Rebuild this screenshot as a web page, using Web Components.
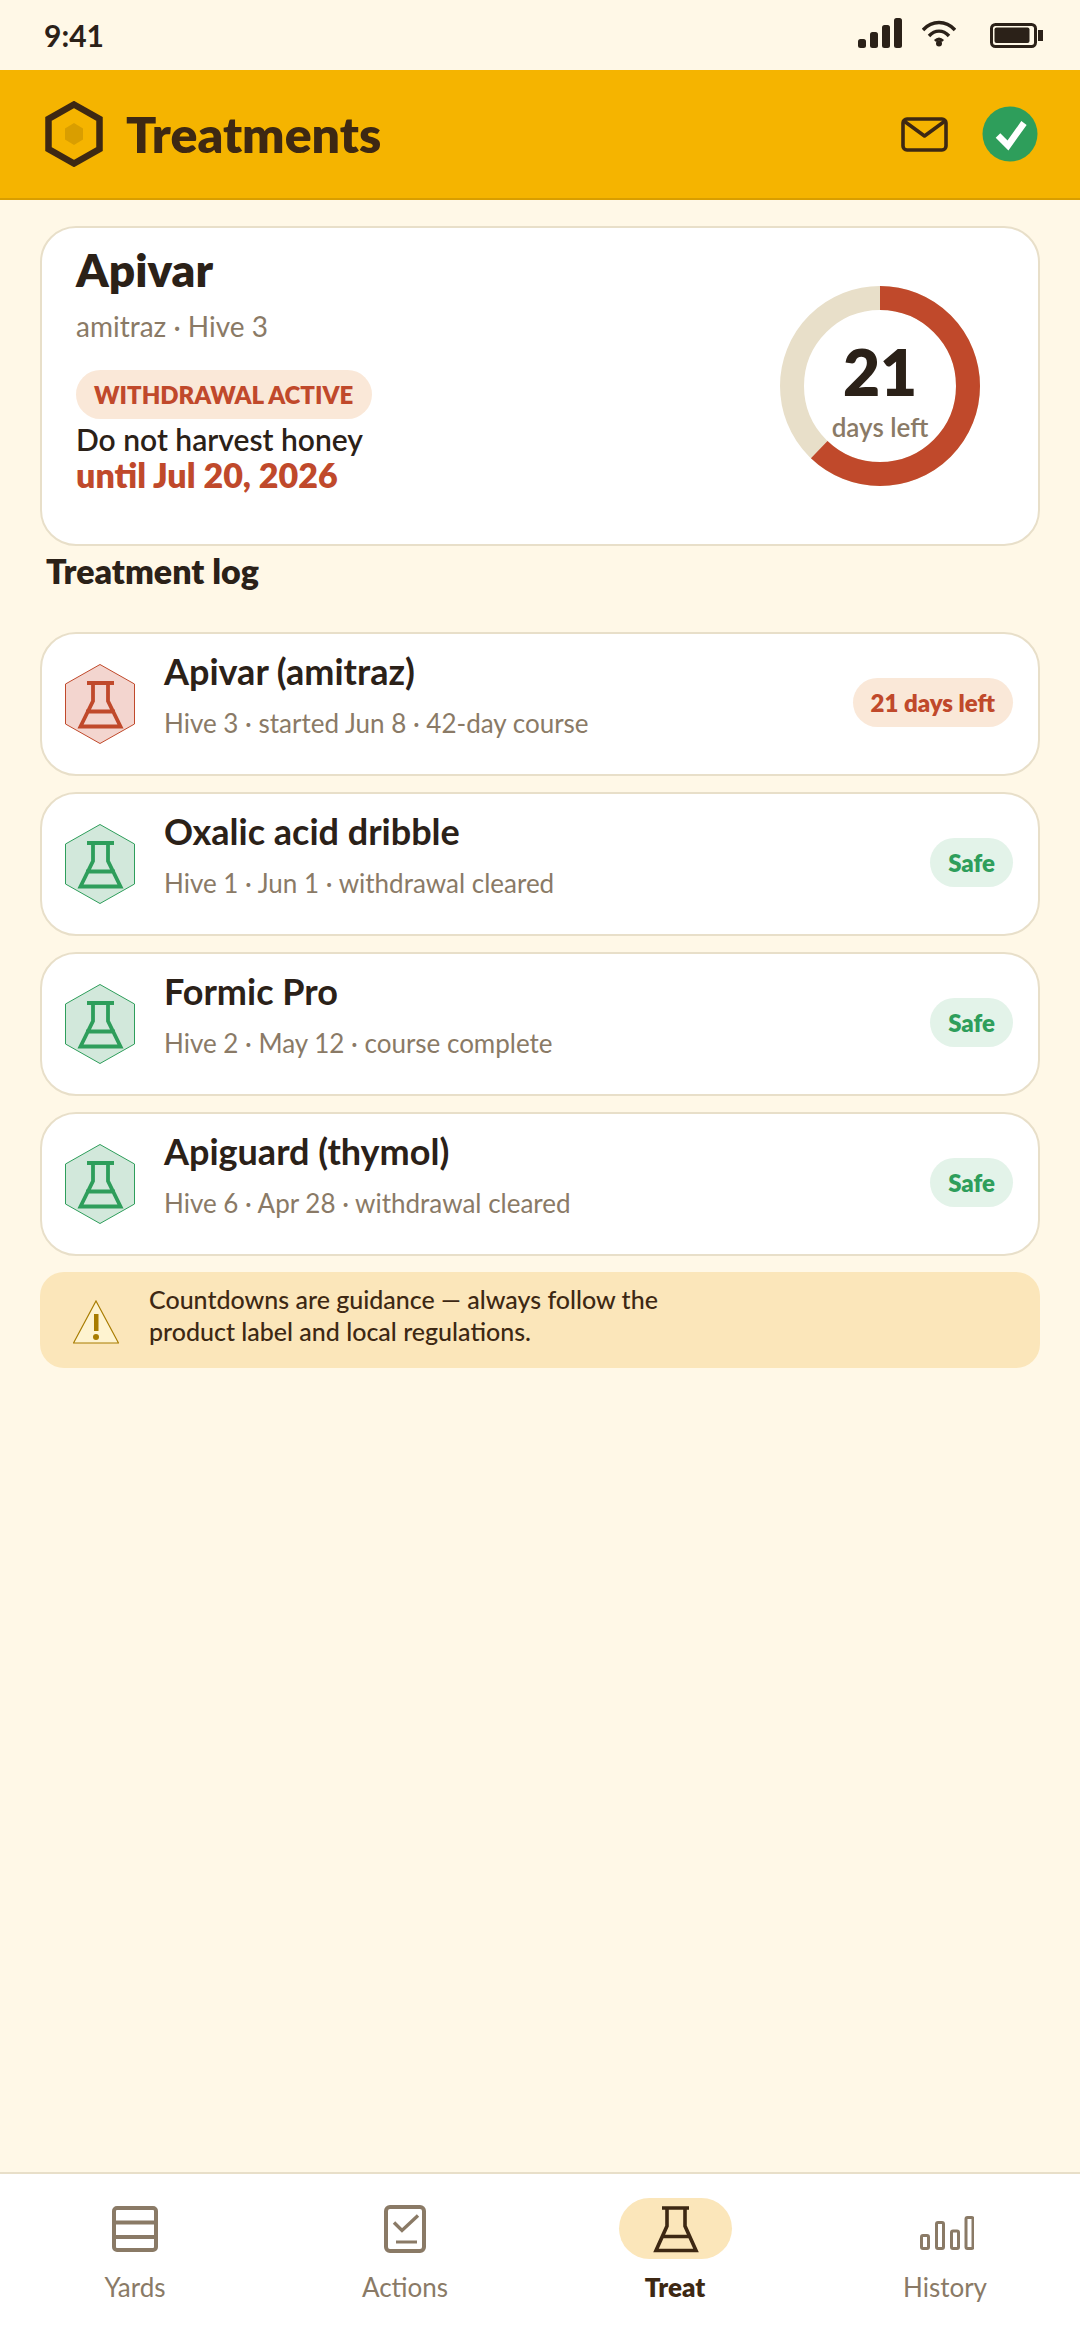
<!DOCTYPE html>
<html>
<head>
<meta charset="utf-8">
<style>
  html, body { margin: 0; background: #FFF8E7; }
  body { font-family: Lato, "Open Sans", sans-serif; color: #2B2118; }
</style>
</head>
<body>
<treat-app>
  <status-bar slot="status"></status-bar>
  <app-header slot="header" title="Treatments"></app-header>
  <withdrawal-card name="Apivar" meta="amitraz · Hive 3" tag="WITHDRAWAL ACTIVE" note="Do not harvest honey" until="until Jul 20, 2026" days="21"></withdrawal-card>
  <section-title>Treatment log</section-title>
  <log-list>
    <log-row tone="red" name="Apivar (amitraz)" meta="Hive 3 · started Jun 8 · 42-day course" chip="21 days left"></log-row>
    <log-row tone="green" name="Oxalic acid dribble" meta="Hive 1 · Jun 1 · withdrawal cleared" chip="Safe"></log-row>
    <log-row tone="green" name="Formic Pro" meta="Hive 2 · May 12 · course complete" chip="Safe"></log-row>
    <log-row tone="green" name="Apiguard (thymol)" meta="Hive 6 · Apr 28 · withdrawal cleared" chip="Safe"></log-row>
  </log-list>
  <notice-banner>Countdowns are guidance — always follow the<br>product label and local regulations.</notice-banner>
  <tab-bar slot="tabs">
    <tab-item label="Yards" icon="yards"></tab-item>
    <tab-item label="Actions" icon="actions"></tab-item>
    <tab-item label="Treat" icon="flask" active></tab-item>
    <tab-item label="History" icon="history"></tab-item>
  </tab-bar>
</treat-app>

<script>
const flaskPaths = `
  <path d="M22 19H49M28 19V37L15.5 62.5H55.5L43 37V19M21 47.5H50"/>`;

class TreatApp extends HTMLElement {
  constructor() {
    super();
    this.attachShadow({ mode: 'open' }).innerHTML = `
      <style>
        :host { display: flex; flex-direction: column; height: 2340px; background: #FFF8E7; }
        main { flex: 1; display: flex; flex-direction: column; padding: 26px 40px 0; }
      </style>
      <slot name="status"></slot>
      <slot name="header"></slot>
      <main><slot></slot></main>
      <slot name="tabs"></slot>`;
  }
}

class StatusBar extends HTMLElement {
  constructor() {
    super();
    this.attachShadow({ mode: 'open' }).innerHTML = `
      <style>
        :host { display: flex; height: 70px; align-items: center; justify-content: space-between; padding: 0 37px 0 44px; color: #2B2118; }
        .time { font-size: 30px; font-weight: 700; line-height: 70px; }
        .icons { display: flex; align-items: flex-start; height: 70px; }
        svg { display: block; margin-top: 18px; }
        .wifi { margin: 20px 34px 0 20px; }
        .bat { margin-top: 23px; }
      </style>
      <span class="time">9:41</span>
      <div class="icons">
        <svg width="44" height="30" viewBox="0 0 44 30" fill="currentColor">
          <rect x="0" y="21" width="8" height="9" rx="2.5"/><rect x="12" y="14" width="8" height="16" rx="2.5"/>
          <rect x="24" y="7" width="8" height="23" rx="2.5"/><rect x="36" y="0" width="8" height="30" rx="2.5"/>
        </svg>
        <svg class="wifi" width="34" height="27" viewBox="0 0 34 27" fill="none" stroke="currentColor" stroke-width="3.4">
          <path d="M1 10C10 0 24 0 33 10"/><path d="M7 16C13 9.5 21 9.5 27 16"/>
          <path d="M13 21C15.5 18.5 18.500 18.500 21 21" stroke-width="3"/><circle cx="17" cy="23.500" r="3" fill="currentColor" stroke="none"/>
        </svg>
        <svg class="bat" width="53" height="26" viewBox="0 0 53 26">
          <rect x="1.5" y="1.5" width="44" height="22" rx="4" fill="none" stroke="currentColor" stroke-width="3"/>
          <rect x="4.500" y="4.500" width="35" height="15.500" rx="2" fill="currentColor"/>
          <rect x="48" y="7" width="5" height="11" fill="currentColor"/>
        </svg>
      </div>`;
  }
}

class AppHeader extends HTMLElement {
  constructor() {
    super();
    this.attachShadow({ mode: 'open' }).innerHTML = `
      <style>
        :host { display: flex; align-items: center; box-sizing: border-box; height: 130px; background: #F5B400; border-bottom: 2px solid #D99E00; padding: 0 42px 0 45px; color: #3D2813; }
        h1 { margin: 0 0 0 23px; flex: 1; font-size: 50px; line-height: 60px; font-weight: 800; }
        svg { display: block; }
        .mail { margin-right: 34px; }
      </style>
      <svg width="58" height="66" viewBox="0 0 58 66">
        <path d="M29 3.5L54.5 18V48L29 62.5L3.5 48V18Z" fill="none" stroke="#3D2813" stroke-width="6.5"/>
        <path d="M29 22L38 27.5V38.5L29 44L20 38.5V27.5Z" fill="#D99E00"/>
      </svg>
      <h1>${this.getAttribute('title')}</h1>
      <svg class="mail" width="47" height="35" viewBox="0 0 47 35" fill="none" stroke="#3D2813" stroke-width="3.6" stroke-linejoin="round">
        <rect x="2" y="2" width="43" height="31" rx="4"/><path d="M3 4L23.5 19L44 4"/>
      </svg>
      <svg width="56" height="56" viewBox="0 0 56 56">
        <circle cx="28" cy="28" r="27.5" fill="#2E9E5B"/>
        <path d="M16 29.5L26 39.5L42 17" fill="none" stroke="#fff" stroke-width="6.5"/>
      </svg>`;
  }
}

class WithdrawalCard extends HTMLElement {
  constructor() {
    super();
    const a = n => this.getAttribute(n);
    this.attachShadow({ mode: 'open' }).innerHTML = `
      <style>
        :host { display: flex; align-items: center; justify-content: space-between; box-sizing: border-box; height: 320px; background: #fff; border: 2px solid #E8DFC9; border-radius: 36px; padding: 0 58px 0 34px; }
        .info { align-self: flex-start; margin-top: 14px; }
        h2 { margin: 0; font-size: 46px; line-height: 56px; font-weight: 800; color: #2B2118; }
        .meta { font-size: 28px; line-height: 36px; color: #8A7A66; margin-top: 10px; }
        .tag { display: block; width: fit-content; margin-top: 26px; background: #FAE8D8; color: #C0492B; font-size: 24px; line-height: 49px; font-weight: 800; padding: 0 19px 0 18px; border-radius: 25px; }
        .note { font-size: 30px; line-height: 34px; font-weight: 600; margin-top: 3px; }
        .until { font-size: 34px; line-height: 38px; font-weight: 800; color: #C0492B; }
        .ring { position: relative; width: 200px; height: 200px; flex: none; }
        .ring svg { display: block; }
        .center { position: absolute; inset: 0; padding-top: 10px; box-sizing: border-box; display: flex; flex-direction: column; align-items: center; justify-content: center; }
        .num { font-size: 64px; line-height: 66px; font-weight: 800; color: #2B2118; }
        .lbl { font-size: 26px; line-height: 32px; font-weight: 600; color: #8A7A66; margin-top: 6px; }
      </style>
      <div class="info">
        <h2>${a('name')}</h2>
        <div class="meta">${a('meta')}</div>
        <span class="tag">${a('tag')}</span>
        <div class="note">${a('note')}</div>
        <div class="until">${a('until')}</div>
      </div>
      <div class="ring">
        <svg width="200" height="200" viewBox="0 0 200 200" fill="none" stroke-width="24">
          <circle cx="100" cy="100" r="88" stroke="#E8DFC9"/>
          <circle cx="100" cy="100" r="88" stroke="#C0492B" stroke-dasharray="343 553" transform="rotate(-90 100 100)"/>
        </svg>
        <div class="center"><span class="num">${a('days')}</span><span class="lbl">days left</span></div>
      </div>`;
  }
}

class SectionTitle extends HTMLElement {
  constructor() {
    super();
    this.attachShadow({ mode: 'open' }).innerHTML = `
      <style>
        :host { display: block; font-size: 34px; line-height: 44px; font-weight: 800; color: #2B2118; margin: 3px 0 39px 6px; }
      </style>
      <slot></slot>`;
  }
}

class LogList extends HTMLElement {
  constructor() {
    super();
    this.attachShadow({ mode: 'open' }).innerHTML = `
      <style>:host { display: flex; flex-direction: column; gap: 16px; }</style>
      <slot></slot>`;
  }
}

class LogRow extends HTMLElement {
  constructor() {
    super();
    const a = n => this.getAttribute(n);
    const c = a('tone') === 'red'
      ? { fg: '#C0492B', hex: '#F3D5CF', chip: '#FAE8D8' }
      : { fg: '#2E9E5B', hex: '#D2E8DB', chip: '#E3F3E9' };
    this.attachShadow({ mode: 'open' }).innerHTML = `
      <style>
        :host { display: flex; align-items: center; box-sizing: border-box; height: 144px; background: #fff; border: 2px solid #E8DFC9; border-radius: 36px; padding: 0 25px 0 23px; }
        svg { display: block; flex: none; overflow: visible; }
        .txt { flex: 1; margin-left: 29px; align-self: flex-start; margin-top: 14px; }
        .name { font-size: 36px; line-height: 46px; font-weight: 700; color: #2B2118; }
        .meta { font-size: 26px; line-height: 34px; color: #8A7A66; margin-top: 12px; }
        .chip { background: ${c.chip}; color: ${c.fg}; font-size: 24px; line-height: 49px; font-weight: 800; padding: 0 18px; border-radius: 25px; margin-bottom: 3px; }
      </style>
      <svg width="70" height="80" viewBox="0 0 70 80" fill="none">
        <path d="M35 .5L69.5 20V60L35 79.5L.5 60V20Z" fill="${c.hex}" stroke="${c.fg}" stroke-width="1"/>
        <g stroke="${c.fg}" stroke-width="3.800">${flaskPaths}</g>
      </svg>
      <div class="txt">
        <div class="name">${a('name')}</div>
        <div class="meta">${a('meta')}</div>
      </div>
      <span class="chip">${a('chip')}</span>`;
  }
}

class NoticeBanner extends HTMLElement {
  constructor() {
    super();
    this.attachShadow({ mode: 'open' }).innerHTML = `
      <style>
        :host { display: flex; align-items: center; box-sizing: border-box; height: 96px; margin-top: 16px; background: #FBE6BA; border-radius: 24px; padding: 0 33px; color: #3D2813; font-size: 25px; line-height: 32px; font-weight: 500; }
        svg { display: block; flex: none; margin-top: 3px; }
        .t { margin: 0 0 11px 30px; }
      </style>
      <svg width="46" height="44" viewBox="0 0 46 44">
        <path d="M23 1L45.5 43H.5Z" fill="#FEF3D0" stroke="#A87C00" stroke-width="1.2"/>
        <rect x="21" y="14" width="4.5" height="17" fill="#A87C00"/><circle cx="23" cy="37" r="3" fill="#A87C00"/>
      </svg>
      <div class="t"><slot></slot></div>`;
  }
}

class TabBar extends HTMLElement {
  constructor() {
    super();
    this.attachShadow({ mode: 'open' }).innerHTML = `
      <style>
        :host { display: grid; grid-template-columns: repeat(4, 1fr); box-sizing: border-box; height: 168px; background: #fff; border-top: 2px solid #E8DFC9; padding-top: 24px; }
      </style>
      <slot></slot>`;
  }
}

const tabIcons = {
  yards: `<svg width="46" height="46" viewBox="0 0 46 46" fill="none" stroke="currentColor" stroke-width="4"><rect x="2" y="2" width="42" height="42" rx="3"/><path d="M2 16.500H44M2 31H44"/></svg>`,
  actions: `<svg width="42" height="48" viewBox="0 0 42 48" fill="none" stroke="currentColor" stroke-width="4"><rect x="2" y="2" width="38" height="44" rx="4"/><path d="M10 17.500L18 25.500L34 10.500" stroke-width="3.400"/><path d="M12 37H33" stroke-width="3"/></svg>`,
  flask: `<svg width="48" height="48" viewBox="0 0 48 48" fill="none" stroke="currentColor" stroke-width="3.600"><path d="M11 3H38M16 3V21L5 45.500H45L34 21V3M10 31.500H40"/></svg>`,
  history: `<svg width="54" height="34" viewBox="0 0 54 34" fill="none" stroke="currentColor" stroke-width="3"><rect x="1.500" y="19.500" width="7" height="13" rx="1.500"/><rect x="16.500" y="6.500" width="7" height="26" rx="1.500"/><rect x="31.500" y="15" width="7" height="17.500" rx="1.500"/><rect x="46" y="1.500" width="7" height="31" rx="1.500"/></svg>`
};

class TabItem extends HTMLElement {
  constructor() {
    super();
    const active = this.hasAttribute('active');
    this.attachShadow({ mode: 'open' }).innerHTML = `
      <style>
        :host { display: flex; flex-direction: column; align-items: center; color: ${active ? '#3D2813' : '#8A7A66'}; }
        .icon { display: flex; align-items: center; justify-content: center; width: 113px; height: 61px; border-radius: 31px; background: ${active ? '#FBE6BA' : 'transparent'}; }
        .icon.history { align-items: flex-end; padding: 0 0 9px 4px; box-sizing: border-box; }
        svg { display: block; }
        .lbl { font-size: 26px; line-height: 34px; margin-top: 11px; font-weight: ${active ? 800 : 400}; }
      </style>
      <div class="icon ${this.getAttribute('icon')}">${tabIcons[this.getAttribute('icon')]}</div>
      <div class="lbl">${this.getAttribute('label')}</div>`;
  }
}

customElements.define('treat-app', TreatApp);
customElements.define('status-bar', StatusBar);
customElements.define('app-header', AppHeader);
customElements.define('withdrawal-card', WithdrawalCard);
customElements.define('section-title', SectionTitle);
customElements.define('log-list', LogList);
customElements.define('log-row', LogRow);
customElements.define('notice-banner', NoticeBanner);
customElements.define('tab-bar', TabBar);
customElements.define('tab-item', TabItem);
</script>
</body>
</html>
